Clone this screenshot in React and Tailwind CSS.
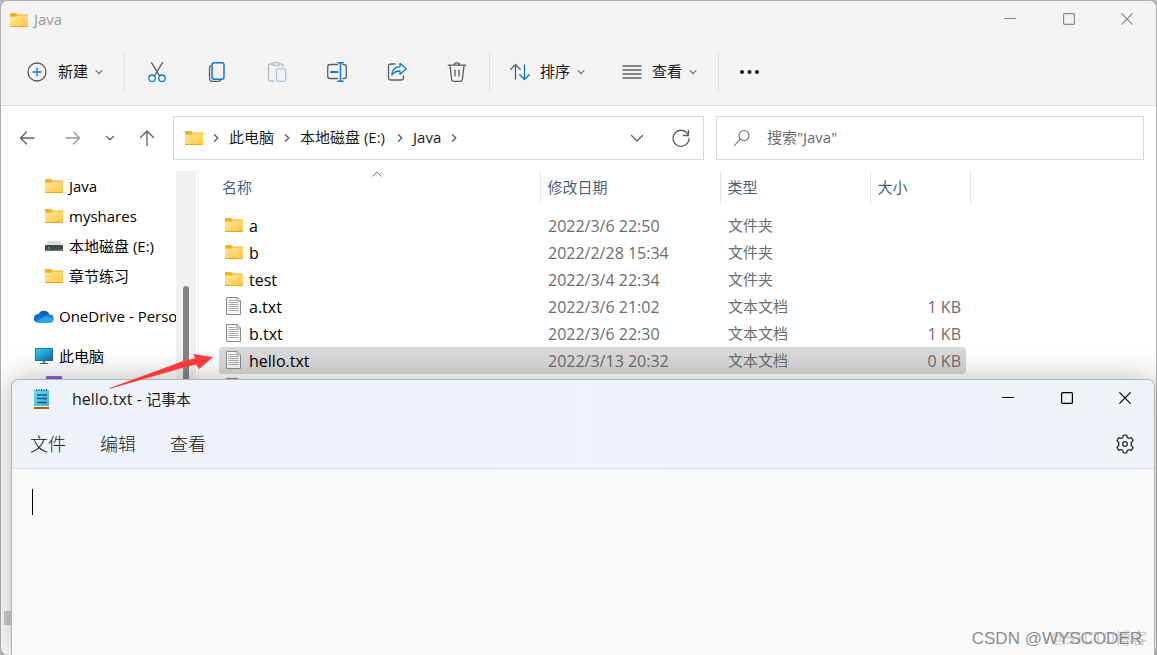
const NAV_ITEMS = [
  { name: "Java", icon: "folder" },
  { name: "myshares", icon: "folder" },
  { name: "本地磁盘 (E:)", icon: "drive" },
  { name: "章节练习", icon: "folder" },
];

const FILES = [
  { name: "a", date: "2022/3/6 22:50", type: "文件夹", size: "", folder: true },
  { name: "b", date: "2022/2/28 15:34", type: "文件夹", size: "", folder: true },
  { name: "test", date: "2022/3/4 22:34", type: "文件夹", size: "", folder: true },
  { name: "a.txt", date: "2022/3/6 21:02", type: "文本文档", size: "1 KB" },
  { name: "b.txt", date: "2022/3/6 22:30", type: "文本文档", size: "1 KB" },
  { name: "hello.txt", date: "2022/3/13 20:32", type: "文本文档", size: "0 KB", selected: true },
  { name: "test.txt", date: "2022/3/6 22:30", type: "文本文档", size: "1 KB" },
];

function FolderIcon() {
  return (
    <svg width="18" height="14" viewBox="0 0 18 14" className="shrink-0">
      <defs>
        <linearGradient id="folder" x1="0" y1="0" x2="1" y2="1">
          <stop offset="0" stopColor="#ffe8a0" />
          <stop offset="1" stopColor="#ffc73a" />
        </linearGradient>
      </defs>
      <path d="M0 .8Q0 0 .8 0H6l1.6 1.5H18V4H0z" fill="#f8b11c" />
      <path d="M0 3.8h6.2L7.6 2.4H18V14H0z" fill="url(#folder)" />
      <path d="M0 13h18v1H0z" fill="#e9a725" />
    </svg>
  );
}

function DriveIcon() {
  return (
    <svg width="18" height="10" viewBox="0 0 18 10" className="shrink-0">
      <path d="M3 0h12l3 4H0z" fill="#dcdfe1" />
      <rect y="4" width="18" height="6" rx=".6" fill="#45484a" />
      <rect y="8.6" width="18" height="1.4" fill="#6b6e70" />
      <rect x="3" y="6" width="1.4" height="1.6" fill="#3fe05a" />
    </svg>
  );
}

function OneDriveIcon() {
  return (
    <svg width="20" height="13" viewBox="0 0 20 13" className="shrink-0">
      <path d="M4.5 4.2A6 6 0 0 1 15.4 4.4L9 8z" fill="#0f5fb4" />
      <path d="M1.6 11.8A4.3 4.3 0 0 1 4.6 4C6.6 3.4 8.5 4.5 12 6.7L6 13H4.3A4.3 4.3 0 0 1 1.6 11.8z" fill="#1173cf" />
      <path d="M11 6.2A5 5 0 0 1 15.3 4.3A4.4 4.4 0 0 1 19.7 8.5L16 10z" fill="#1a86dc" />
      <path d="M1.6 11.8L11 6.3L19.7 8.4A3.9 3.9 0 0 1 16 13H4.5A4.3 4.3 0 0 1 1.6 11.8z" fill="#29a5ea" />
    </svg>
  );
}

function MonitorIcon() {
  return (
    <svg width="18" height="16" viewBox="0 0 18 16" className="shrink-0">
      <defs>
        <linearGradient id="screen" x1="0" y1="0" x2="1" y2="1">
          <stop offset="0" stopColor="#35d6e0" />
          <stop offset="1" stopColor="#1067bd" />
        </linearGradient>
      </defs>
      <rect width="18" height="13" rx=".6" fill="#1a6fa8" />
      <rect x=".8" y=".8" width="16.4" height="11.4" fill="url(#screen)" />
      <path d="M7.5 13h3v2h-3z" fill="#8e979c" />
      <path d="M5 15h8v1H5z" fill="#5b6468" />
    </svg>
  );
}

function TextFileIcon() {
  return (
    <svg width="15" height="18" viewBox="0 0 15 18" className="shrink-0">
      <path d="M.5.5h10.8L14.5 3.7V17.5H.5z" fill="#f7f7f7" stroke="#878b8b" />
      <path d="M11 .5v3.5h3.5" fill="#fff" stroke="#878b8b" />
      <path d="M2.5 3.5h7M2.5 5.5h10M2.5 7.5h10M2.5 9.5h10M2.5 11.5h10M2.5 13.5h10" stroke="#a9acac" />
    </svg>
  );
}

function NotepadIcon() {
  return (
    <svg width="15" height="20" viewBox="0 0 15 20" className="shrink-0">
      <defs>
        <linearGradient id="pad" x1="0" y1="0" x2="1" y2="1">
          <stop offset="0" stopColor="#6fd7f0" />
          <stop offset="1" stopColor="#3fb0d8" />
        </linearGradient>
      </defs>
      <rect y="16" width="15" height="4" rx=".6" fill="#b4560c" />
      <rect y="1" width="15" height="17" rx=".6" fill="url(#pad)" />
      <path d="M0 17.5h15" stroke="#e6f2f7" />
      <path d="M2.5 0v2M5 0v2M7.5 0v2M10 0v2M12.5 0v2" stroke="#125a78" />
      <path d="M3 6h10M3 9.5h10M3 13.5h10" stroke="#0b5c80" strokeWidth="1.5" />
    </svg>
  );
}

function Stroke({ size = 20, width = 1.3, className = "text-[#5f5f5f]", children }) {
  return (
    <svg
      width={size}
      height={size}
      viewBox={`0 0 ${size} ${size}`}
      fill="none"
      stroke="currentColor"
      strokeWidth={width}
      strokeLinecap="round"
      strokeLinejoin="round"
      className={`shrink-0 ${className}`}
    >
      {children}
    </svg>
  );
}

const Down = () => (
  <Stroke size={10} width={1.1} className="text-[#777]">
    <path d="M2 3.5l3 3 3-3" />
  </Stroke>
);

const Right = () => (
  <Stroke size={10} width={1.4}>
    <path d="M3.5 1.8L6.8 5 3.5 8.2" />
  </Stroke>
);

function CutIcon() {
  return (
    <Stroke>
      <path d="M4.5.7L12.5 13.8M15.5.7L7.5 13.8" />
      <circle cx="5" cy="16.2" r="3.2" stroke="#0a78d4" />
      <circle cx="15" cy="16.2" r="3.2" stroke="#0a78d4" />
    </Stroke>
  );
}

function CopyIcon() {
  return (
    <Stroke>
      <path d="M4 3.5Q2.5 4.2 2.5 6v10q0 3.5 3.5 3.5h5q2 0 2.8-1.5" />
      <rect x="5" y=".8" width="12" height="16.4" rx="2.2" stroke="#0a78d4" strokeWidth="1.5" />
    </Stroke>
  );
}

function PasteIcon() {
  return (
    <Stroke className="text-[#bcbcbc]">
      <path d="M6 2H3Q1.500 2 1.5 3.5v14Q1.5 19 3 19h3.5M12 2h2.5Q16 2 16 3.5V4.5" />
      <rect x="5.6" y=".7" width="6.8" height="2.8" rx="1.4" />
      <rect x="9.5" y="6.8" width="9.2" height="12.5" rx="1.5" stroke="#9bcbee" />
    </Stroke>
  );
}

function RenameIcon() {
  return (
    <Stroke>
      <path d="M10.5 2.5H3Q.7 2.5.7 4.8v9.4q0 2.3 2.3 2.3h7.5M16 2.5h1q2.3 0 2.3 2.3v9.4q0 2.3-2.3 2.3h-1" />
      <path d="M4 10h6.500" stroke="#0a78d4" strokeWidth="2" />
      <path d="M13.5.7v18.6M11 .7h5M11 19.3h5" stroke="#0a78d4" strokeWidth="1.5" />
    </Stroke>
  );
}

function ShareIcon() {
  return (
    <Stroke>
      <path d="M8 2H4Q1.5 2 1.5 4.5v11Q1.5 18 4 18h10q2.5 0 2.5-2.5V14" />
      <path d="M13 1.3l6.2 5.5L13 12.2V9C9 9 6.7 10.3 4.8 13 5 8.3 8 4.9 13 4.6z" stroke="#0a78d4" />
    </Stroke>
  );
}

function TrashIcon() {
  return (
    <Stroke>
      <path d="M1.3 3.2h17.4M7.3 3C7.3 1.5 8.3.8 10 .8s2.7.7 2.7 2.2M3 3.4l1.6 13.9Q4.9 19.3 6.9 19.3h6.2q2 0 2.3-2L17 3.4M8 8v6M12 8v6" />
    </Stroke>
  );
}

function SortIcon() {
  return (
    <Stroke>
      <path d="M5.5 17V2.5M.8 7.2L5.5 2.5l4.7 4.7" />
      <path d="M14.5 3v14.5M9.8 12.8l4.7 4.7 4.7-4.7" stroke="#0a78d4" />
    </Stroke>
  );
}

function WindowButtons({ className }) {
  return (
    <div className={`flex h-9 ${className}`}>
      <button aria-label="最小化" className="flex w-[59px] items-center justify-center">
        <svg width="12" height="12" fill="none" stroke="currentColor"><path d="M0 5.500h12" /></svg>
      </button>
      <button aria-label="最大化" className="flex w-[59px] items-center justify-center">
        <svg width="12" height="12" fill="none" stroke="currentColor" strokeWidth="1.2"><rect x=".6" y=".6" width="10.8" height="10.8" rx="1" /></svg>
      </button>
      <button aria-label="关闭" className="flex w-[58px] items-center justify-center">
        <svg width="12" height="12" fill="none" stroke="currentColor" strokeWidth="1.2"><path d="M.4.4l11.2 11.2M11.6.4L.4 11.6" /></svg>
      </button>
    </div>
  );
}

function Toolbar() {
  return (
    <div className="flex h-[68px] items-center border-b border-[#dedede] pl-[26px] text-[15px] text-[#1a1a1a]">
      <button className="flex items-center">
        <Stroke className="mr-[11px] text-[#5a5a5a]">
          <circle cx="10" cy="10" r="9" />
          <path d="M10 6v8M6 10h8" stroke="#0a78d4" />
        </Stroke>
        <span className="mr-[6px]">新建</span>
        <Down />
      </button>
      <div className="ml-5 mr-[22px] h-10 w-px bg-[#e0e0e0]" />
      <div className="flex gap-10">
        <button aria-label="剪切"><CutIcon /></button>
        <button aria-label="复制"><CopyIcon /></button>
        <button aria-label="粘贴"><PasteIcon /></button>
        <button aria-label="重命名"><RenameIcon /></button>
        <button aria-label="共享"><ShareIcon /></button>
        <button aria-label="删除"><TrashIcon /></button>
      </div>
      <div className="ml-[22px] mr-5 h-10 w-px bg-[#e0e0e0]" />
      <button className="flex items-center">
        <SortIcon />
        <span className="ml-[10px] mr-[6px]">排序</span>
        <Down />
      </button>
      <button className="ml-9 flex items-center">
        <Stroke><path d="M.5 4h19M.5 8h19M.5 12h19M.5 16h19" strokeLinecap="butt" /></Stroke>
        <span className="ml-[10px] mr-[6px]">查看</span>
        <Down />
      </button>
      <div className="mx-5 h-10 w-px bg-[#e0e0e0]" />
      <button aria-label="更多">
        <svg width="22" height="20" fill="#1a1a1a">
          <circle cx="3" cy="10" r="2" />
          <circle cx="10.500" cy="10" r="2" />
          <circle cx="18" cy="10" r="2" />
        </svg>
      </button>
    </div>
  );
}

function AddressRow() {
  return (
    <div className="flex h-[65px] items-center pb-[2px] pl-4 pr-3">
      <div className="flex w-[156px] shrink-0 items-center">
        <button aria-label="后退">
          <Stroke><path d="M3.5 10h13.5M9.5 4L3.5 10l6 6" /></Stroke>
        </button>
        <button aria-label="前进" className="ml-[26px]">
          <Stroke className="text-[#9b9b9b]"><path d="M3 10h13.5M10.5 4l6 6-6 6" /></Stroke>
        </button>
        <button aria-label="最近" className="ml-[22px]">
          <Stroke size={10}><path d="M1.5 3.5L5 6.8 8.5 3.5" /></Stroke>
        </button>
        <button aria-label="上移" className="ml-[22px]">
          <Stroke><path d="M10 17.5V3M3.500 9.5L10 3l6.5 6.5" /></Stroke>
        </button>
      </div>
      <div className="flex h-11 flex-1 items-center gap-2 border border-[#d9d9d9] pl-[11px] pr-3 text-[15px] text-[#1a1a1a]">
        <FolderIcon />
        <Right />
        <a href="#pc">此电脑</a>
        <Right />
        <a href="#e" className="pr-[2px]">本地磁盘 (E:)</a>
        <Right />
        <a href="#java">Java</a>
        <Right />
        <button aria-label="展开" className="ml-auto mr-4">
          <Stroke><path d="M4.5 7.5L10 13l5.5-5.5" /></Stroke>
        </button>
        <button aria-label="刷新">
          <Stroke><path d="M17.500 7.5A8 8 0 1 0 18 10.5M17.5 2.5v5h-5" /></Stroke>
        </button>
      </div>
      <label className="ml-3 flex h-11 w-[428px] items-center border border-[#d9d9d9] pl-4">
        <Stroke size={18} width={1.1} className="mr-4 text-[#6f6f6f]">
          <circle cx="11" cy="6.5" r="5" />
          <path d="M7.2 10.2L1.5 16.5" />
        </Stroke>
        <input
          type="search"
          aria-label="搜索"
          placeholder={'搜索"Java"'}
          className="min-w-0 flex-1 text-[15px] outline-none placeholder:text-[#6b6b6b]"
        />
      </label>
    </div>
  );
}

function Sidebar() {
  return (
    <nav className="flex w-[175px] shrink-0 flex-col gap-[10px] overflow-hidden whitespace-nowrap text-[15px] text-black">
      <ul>
        {NAV_ITEMS.map((item) => (
          <li key={item.name}>
            <a href="#nav" className="flex h-[30px] items-center gap-[6px] pl-11">
              {item.icon === "drive" ? <DriveIcon /> : <FolderIcon />}
              {item.name}
            </a>
          </li>
        ))}
      </ul>
      <a href="#onedrive" className="flex h-[30px] items-center gap-[5px] pl-[33px]">
        <OneDriveIcon />
        OneDrive - Personal
      </a>
      <div>
        <a href="#pc" className="flex h-[30px] items-center gap-[6px] pl-[34px]">
          <MonitorIcon />
          此电脑
        </a>
        <a href="#video" aria-label="视频" className="flex h-[30px] items-center pl-[45px]">
          <svg width="16" height="20" className="shrink-0">
            <rect width="16" height="20" rx="1" fill="#9a63dc" />
            <path d="M1 3h14" stroke="#5b2a96" strokeDasharray="2 2" />
          </svg>
        </a>
      </div>
    </nav>
  );
}

function FileTable() {
  return (
    <table className="ml-5 w-[751px] table-fixed border-collapse self-start text-left text-[15px] text-[#6d6d6d]">
      <colgroup>
        <col className="w-[321px]" />
        <col className="w-[180px]" />
        <col className="w-[150px]" />
        <col className="w-[100px]" />
      </colgroup>
      <thead className="text-[#4c607a]">
        <tr className="h-[33px]">
          <th className="relative border-r border-[#e5e5e5] p-0 pl-[3px] font-normal">
            名称
            <svg width="10" height="6" fill="none" stroke="#777" className="absolute left-[153px] top-0">
              <path d="M.5 5.5L5 1l4.5 4.5" />
            </svg>
          </th>
          <th className="border-r border-[#e5e5e5] p-0 pl-[7px] font-normal">修改日期</th>
          <th className="border-r border-[#e5e5e5] p-0 pl-[7px] font-normal">类型</th>
          <th className="border-r border-[#e5e5e5] p-0 pl-[7px] font-normal">大小</th>
        </tr>
      </thead>
      <tbody>
        <tr className="h-2"><td colSpan={4} className="p-0" /></tr>
        {FILES.map((file) => {
          const bg = file.selected ? "bg-[#d9d9d9]" : "";
          return (
            <tr key={file.name} className="h-[27px]">
              <td className="p-0">
                <div className={`flex h-[27px] items-center rounded-l-sm pl-[6px] text-base text-black ${bg}`}>
                  <span className="flex w-6 items-center pb-[2px]">
                    {file.folder ? <FolderIcon /> : <span className="pl-px"><TextFileIcon /></span>}
                  </span>
                  {file.name}
                </div>
              </td>
              <td className={`p-0 pl-2 text-base ${bg}`}>{file.date}</td>
              <td className={`p-0 pl-2 ${bg}`}>{file.type}</td>
              <td className="p-0">
                <div className={`mr-1 flex h-[27px] items-center justify-end rounded-r-sm pr-[5px] text-base ${bg}`}>
                  {file.size}
                </div>
              </td>
            </tr>
          );
        })}
      </tbody>
    </table>
  );
}

function Explorer() {
  return (
    <section className="flex h-screen flex-col overflow-hidden rounded-lg border border-b-0 border-[#b0b0b0] bg-white">
      <div className="bg-[#f3f3f3]">
        <header className="flex h-[37px] justify-between">
          <h1 className="flex items-center gap-[6px] pl-[9px] text-[15px] text-[#9a9a9a]">
            <FolderIcon />
            Java
          </h1>
          <WindowButtons className="text-[#8a8a8a]" />
        </header>
        <Toolbar />
      </div>
      <AddressRow />
      <div className="flex min-h-0 flex-1 overflow-hidden">
        <Sidebar />
        <div className="flex w-5 shrink-0 justify-center bg-[#f0f0f0] pt-[115px]">
          <div className="w-[6px] rounded-t-sm bg-[#858585]" />
        </div>
        <div className="ml-[2px] w-px shrink-0 bg-[#f0f0f0]" />
        <FileTable />
      </div>
      <footer className="flex h-11 items-start pl-[3px]">
        <div className="h-[14px] w-5 bg-[#cecece]" />
      </footer>
    </section>
  );
}

function Notepad() {
  return (
    <section className="absolute bottom-0 left-[11px] right-[2px] top-[379px] flex flex-col overflow-hidden rounded-t-lg border border-b-0 border-[#b4b4b4] bg-[#f9f9f9] shadow-[0_0_32px_rgba(0,0,0,0.28)]">
      <div className="border-b border-[#dfe3e8] bg-linear-to-r from-[#edf3f8] via-[#eff3fc] to-[#edf3f7]">
        <header className="flex h-10 justify-between">
          <h2 className="flex items-center gap-[23px] pb-[3px] pl-[22px] text-[15px] text-[#1a1a1a]">
            <NotepadIcon />
            <span><span className="text-base">hello.txt - </span>记事本</span>
          </h2>
          <WindowButtons className="text-black" />
        </header>
        <div className="flex h-12 items-center gap-[34px] pl-[18px] pr-[19px] text-lg font-light text-[#1a1a1a]">
          <button>文件</button>
          <button>编辑</button>
          <button>查看</button>
          <button aria-label="设置" className="ml-auto">
            <Stroke className="text-[#2b2b2b]">
              <path d="M8.2 1.3Q10 .9 11.8 1.3L12.3 3.7Q13 4 13.8 4.5L16.2 3.7Q17.4 5 18 6.8L16.2 8.5Q16.5 10 16.2 11.5L18 13.2Q17.4 15 16.2 16.3L13.8 15.5Q13 16 12.3 16.3L11.8 18.7Q10 19.1 8.2 18.7L7.7 16.3Q7 16 6.2 15.5L3.8 16.3Q2.6 15 2 13.2L3.8 11.5Q3.5 10 3.8 8.5L2 6.8Q2.6 5 3.8 3.7L6.2 4.5Q7 4 7.7 3.7z" />
              <circle cx="10" cy="10" r="2.3" />
            </Stroke>
          </button>
        </div>
      </div>
      <div className="flex flex-1 pl-5 pt-5">
        <div className="h-[26px] w-px bg-black" />
        <textarea aria-label="文本编辑器" className="flex-1 resize-none text-lg outline-none" />
      </div>
    </section>
  );
}

export default function App() {
  return (
    <main className="relative min-h-screen overflow-hidden bg-[#b8babc] font-['Open_Sans','Noto_Sans_CJK_SC',sans-serif]">
      <Explorer />
      <Notepad />
      <svg width="106" height="36" viewBox="0 0 106 36" className="absolute left-[108px] top-[353px]">
        <path d="M1 35.2L74 8.5L87 5.3L85.5 1L105 4.3L91 16L88 11.5L76 14.5L2 35.7z" fill="#fb3b38" />
      </svg>
      <p className="absolute bottom-[5px] right-[10px] text-base text-[#c8c8c8]">@51CTO博客</p>
      <p className="absolute bottom-[4px] right-[15px] font-['Liberation_Sans',sans-serif] text-[17px] text-[#8c8c8c]">CSDN @WYSCODER</p>
    </main>
  );
}
